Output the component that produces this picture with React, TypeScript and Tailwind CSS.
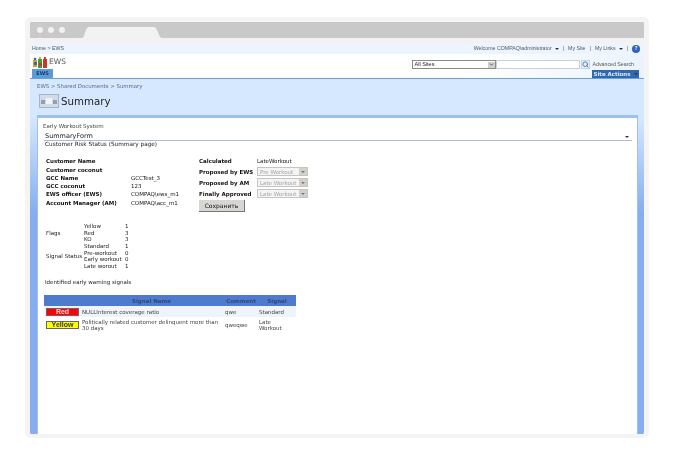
import { ChevronDown, Search } from "lucide-react";

const font = "font-['DejaVu_Sans',sans-serif]";
const narrow = "font-['Liberation_Sans',sans-serif]";

const customerRows = [
  ["Customer Name", ""],
  ["Customer coconut", ""],
  ["GCC Name", "GCCTest_3"],
  ["GCC coconut", "123"],
  ["EWS officer (EWS)", "COMPAQ\\ews_m1"],
  ["Account Manager (AM)", "COMPAQ\\acc_m1"],
];

const proposals = [
  ["Proposed by EWS", "Pre Workout"],
  ["Proposed by AM", "Late Workout"],
  ["Finally Approved", "Late Workout"],
];

function Arrow() {
  return <span className="ml-[3px] inline-block border-x-[2px] border-t-[2px] border-x-transparent border-t-[#333] align-middle" />;
}

function Logo() {
  return (
    <svg width="14" height="11" viewBox="0 0 14 11">
      <rect x="0" y="3" width="4" height="7" fill="#e0a020" />
      <circle cx="2" cy="2" r="1.3" fill="#3568b8" />
      <rect x="5" y="2" width="4" height="9" fill="#3f9f3f" />
      <circle cx="7" cy="1" r="1.2" fill="#e0a020" />
      <rect x="10" y="2" width="4" height="9" fill="#c8382c" />
      <circle cx="12" cy="1" r="1.2" fill="#c8382c" />
      <rect x="1" y="5" width="3" height="3" fill="#3568b8" />
      <rect x="6" y="6" width="3" height="3" fill="#c8382c" />
    </svg>
  );
}

function Disabled({ value }: { value: string }) {
  return (
    <div className="flex h-[9px] w-[51px] items-center justify-between border border-[#c4c4c4] bg-[#f4f4f4] pl-[2px] text-[5.5px] text-[#a4a4a4]">
      {value}
      <span className="flex h-[7px] w-[8px] items-center justify-center bg-[#d4d0c8]">
        <span className="border-x-[2px] border-t-[2px] border-x-transparent border-t-[#777]" />
      </span>
    </div>
  );
}

function Badge({ label, bg, text }: { label: string; bg: string; text: string }) {
  return (
    <div className={`ml-[2px] flex h-[8px] w-[33px] items-center justify-center border border-[#666] ${narrow} text-[7px] font-bold ${bg} ${text}`}>
      {label}
    </div>
  );
}

export default function App() {
  return (
    <div className={`h-[455px] w-[674px] overflow-hidden bg-white pl-[25px] pt-[17px] ${font} text-[#333]`}>
      <div className="h-[421px] w-[624px] overflow-hidden rounded-[6px] border-[5px] border-b-[4px] border-[#f4f4f4] bg-white">
        {/* browser chrome */}
        <div className="flex h-[16px] items-end bg-[#c9c9c9] pl-[7px]">
          <div className="mb-[5px] flex gap-[5px]">
            <span className="h-[6px] w-[6px] rounded-full bg-[#f2f2f2]" />
            <span className="h-[6px] w-[6px] rounded-full bg-[#f2f2f2]" />
            <span className="h-[6px] w-[6px] rounded-full bg-[#f2f2f2]" />
          </div>
          <svg className="ml-[17px]" width="80" height="11" viewBox="0 0 80 11">
            <path d="M0 11 C3 11 3 0 7 0 H72 C76 0 76 11 80 11 Z" fill="#f2f2f2" />
          </svg>
        </div>
        <div className="h-[5px] bg-[#f2f2f2]" />

        <div className="blur-[0.25px]">
          {/* top links */}
          <div className={`flex h-[11px] items-center justify-between bg-[#eef4fc] pl-[2px] pr-[4px] ${narrow} text-[5.25px] text-[#4a5a6c]`}>
            <span>Home &gt; EWS</span>
            <div className="flex items-center">
              <span>Welcome COMPAQ\administrator</span>
              <Arrow />
              <span className="mx-[4px]">|</span>
              <span>My Site</span>
              <span className="mx-[4px]">|</span>
              <span>My Links</span>
              <Arrow />
              <span className="mx-[4px]">|</span>
              <span className="flex h-[8px] w-[8px] items-center justify-center rounded-full bg-[#2f62b4] text-[5px] font-bold text-white">?</span>
            </div>
          </div>

          {/* site header */}
          <div className="flex h-[25px] justify-between border-b border-[#6f9dd9] bg-linear-to-r from-white from-70% to-[#eaf3fd]">
            <div className="flex flex-col pl-[2px]">
              <div className="flex h-[13px] items-center gap-[2px] pl-[1px] pt-[3px] text-[7.5px] text-[#555]">
                <Logo />
                <span>EWS</span>
              </div>
              <div className="mt-auto flex h-[9px] w-[21px] items-center justify-center bg-[#5d9ad8] text-[5px] font-bold text-[#173a72]">EWS</div>
            </div>
            <div className="flex flex-col items-end pr-[5px]">
              <div className="mt-[6px] flex h-[9px] items-center">
                <div className={`flex h-[9px] w-[84px] items-center justify-between border border-[#8a8a8a] bg-white pl-[2px] ${narrow} text-[5.5px] text-[#222]`}>
                  All Sites
                  <span className="flex h-[6px] w-[7px] items-center justify-center bg-[#d4d0c8]">
                    <ChevronDown size={5} strokeWidth={3} color="#222" />
                  </span>
                </div>
                <div className="h-[9px] w-[84px] border border-[#c8d0da] bg-white" />
                <span className="ml-[1px] flex h-[9px] w-[9px] items-center justify-center border border-[#c8d0da] bg-[#e8f0f8]">
                  <Search size={7} strokeWidth={3} color="#3d74b8" />
                </span>
                <span className={`ml-[3px] mr-[5px] ${narrow} text-[5.25px] text-[#555]`}>Advanced Search</span>
              </div>
              <div className="mt-auto flex h-[8px] w-[47px] items-center justify-center bg-[#2f68ae] text-[5.5px] font-bold text-[#dfeaf8]">
                Site Actions
                <Arrow />
              </div>
            </div>
          </div>

          {/* title area */}
          <div className="flex h-[38px] flex-col bg-[#d6e8ff] pl-[7px] pr-[6px]">
            <div className="pt-[3px] text-[5.4px] text-[#5a6d82]">EWS &gt; Shared Documents &gt; Summary</div>
            <div className="mt-[4px] flex items-center gap-[2px] pl-[2px]">
              <div className="flex h-[14px] w-[20px] items-end justify-center gap-[1px] border border-[#aab4c0] bg-[#d2dbe6] pb-[3px]">
                <span className="h-[4px] w-[4px] bg-[#8f9fb4]" />
                <span className="h-[6px] w-[6px] bg-[#f0f4f8]" />
                <span className="h-[4px] w-[4px] bg-[#8f9fb4]" />
              </div>
              <span className="text-[10.25px] leading-none text-[#222]">Summary</span>
            </div>
            <div className="mt-auto h-[2px] bg-[#9dc1ec]" />
          </div>

          {/* body */}
          <div className="flex h-[317px] bg-[#d6e8ff]">
            <div className="w-[7px] bg-linear-to-b from-[#d6e8ff] to-[#86aeee] to-[30%]" />
            <div className="flex-1 border border-b-0 border-[#9dc1ec] bg-white pt-[4px]">
              <div className="pl-[5px] text-[5.5px] text-[#444]">Early Workout System</div>
              <div className="ml-[6px] mr-[5px] mt-[3px] flex h-[8px] items-center justify-between border-b border-[#aebccc] pl-[1px] pr-[3px] text-[6.5px] text-[#222]">
                SummaryForm
                <span className="border-x-[2px] border-t-[2px] border-x-transparent border-t-[#333]" />
              </div>
              <div className="pl-[7px] text-[5.75px] leading-[7px] text-[#222]">Customer Risk Status (Summary page)</div>

              <div className="mt-[9px] flex pl-[8px] text-[5.5px] text-[#111]">
                <div className="w-[153px]">
                  {customerRows.map(([label, value]) => (
                    <div key={label} className="flex h-[8.3px] items-center">
                      <span className="w-[85px] font-bold">{label}</span>
                      <span>{value}</span>
                    </div>
                  ))}
                </div>
                <div>
                  <div className="flex h-[8px] items-center">
                    <span className="w-[58px] font-bold">Calculated</span>
                    <span>LateWorkout</span>
                  </div>
                  {proposals.map(([label, value]) => (
                    <div key={label} className="mt-[2px] flex h-[9px] items-center">
                      <span className="w-[58px] font-bold">{label}</span>
                      <Disabled value={value} />
                    </div>
                  ))}
                  <div className="mt-[2px] flex h-[12px] w-[46px] items-center justify-center border-b border-r border-[#777] bg-[#d8d6d0] text-[6px]">Сохранить</div>
                </div>
              </div>

              <div className="mt-[11px] flex flex-col gap-[1px] pl-[8px] text-[5.5px] leading-[6.4px] text-[#222]">
                <div className="flex items-center">
                  <span className="w-[38px]">Flags</span>
                  <div className="w-[41px]">
                    <div>Yellow</div>
                    <div>Red</div>
                    <div>KO</div>
                  </div>
                  <div>
                    <div>1</div>
                    <div>3</div>
                    <div>3</div>
                  </div>
                </div>
                <div className="flex items-center">
                  <span className="w-[38px]">Signal Status</span>
                  <div className="w-[41px]">
                    <div>Standard</div>
                    <div>Pre-workout</div>
                    <div>Early workout</div>
                    <div>Late worout</div>
                  </div>
                  <div>
                    <div>1</div>
                    <div>0</div>
                    <div>0</div>
                    <div>1</div>
                  </div>
                </div>
              </div>

              <div className="mt-[9px] pl-[7px] text-[5.5px] text-[#222]">Identified early warning signals</div>

              <div className="ml-[6px] mt-[9px] w-[252px] text-[5.5px] leading-[6.5px] text-[#444]">
                <div className="flex h-[11px] items-center bg-[#4f7bcf] font-bold text-[#33457a]">
                  <span className="w-[180px] pl-[35px] text-center">Signal Name</span>
                  <span className="w-[34px] text-center">Comment</span>
                  <span className="flex-1 text-center">Signal</span>
                </div>
                <div className="flex h-[11px] items-center bg-[#eef3fc]">
                  <span className="w-[38px]"><Badge label="Red" bg="bg-[#ff0000]" text="text-[#ffd0d0]" /></span>
                  <span className="w-[143px]">NULLInterest coverage ratio</span>
                  <span className="w-[34px]">qwe</span>
                  <span>Standard</span>
                </div>
                <div className="flex h-[16px] items-center">
                  <span className="w-[38px]"><Badge label="Yellow" bg="bg-[#ffff00]" text="text-[#333]" /></span>
                  <span className="w-[143px]">Politically related customer delinquent more than 30 days</span>
                  <span className="w-[34px]">qweqwe</span>
                  <span className="w-[28px]">Late Workout</span>
                </div>
              </div>
            </div>
            <div className="w-[6px] bg-linear-to-b from-[#d6e8ff] to-[#86aeee] to-[30%]" />
          </div>
        </div>
      </div>
    </div>
  );
}
